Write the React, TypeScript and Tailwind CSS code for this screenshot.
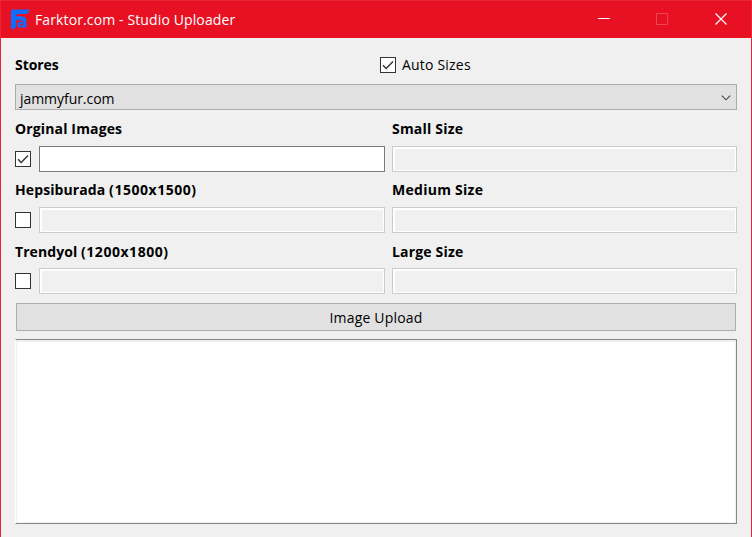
import type { ReactNode } from "react";

const FONT = "font-['Open_Sans','Noto_Sans',sans-serif]";

function Tick() {
  return (
    <svg width="14" height="14" viewBox="0 0 14 14" fill="none" className="block">
      <path d="M2 7.2L5.2 10.4L12 3.6" stroke="#333" strokeWidth="1.4" />
    </svg>
  );
}

function Check({ on = false }: { on?: boolean }) {
  return (
    <span className="block h-4 w-4 shrink-0 border border-[#333] bg-white">
      {on && <Tick />}
    </span>
  );
}

function Field({ enabled = false }: { enabled?: boolean }) {
  return enabled ? (
    <div className="h-[26px] min-w-0 flex-1 border border-[#7a7a7a] bg-white" />
  ) : (
    <div className="h-[26px] min-w-0 flex-1 border border-[#ccc] bg-white pt-0.5 pr-px pb-px pl-0.5">
      <div className="h-full bg-[#f0f0f0]" />
    </div>
  );
}

function Label({ children, track }: { children: ReactNode; track: string }) {
  return <div className={`h-5 text-[14px] leading-5 font-bold whitespace-nowrap ${track}`}>{children}</div>;
}

function Logo() {
  return (
    <svg width="18" height="21" viewBox="0 0 18 21" fill="#0d6efd" className="block">
      <path d="M2 0.5H18V2Q17.4 4.9 15 5H7.5Q5.4 5 5 7.2H10.5Q15.4 7.5 15.4 12V18.6H11.8V13.8Q11.6 11.2 9 11.2H5V17.8Q4.6 20 2 20H0V2.5Q0 0.5 2 0.5Z" />
      <path d="M9 13H11V15.2H9.4Q8.6 15.3 8.6 16Q8.6 16.6 9.4 16.7H12V18.6H9Q6.2 18.4 6.2 15.8Q6.2 13.2 9 13Z" />
    </svg>
  );
}

export default function App() {
  return (
    <div className={`flex h-[537px] w-[752px] flex-col border-x border-t border-[#e9253a] bg-[#f0f0f0] text-[14px] text-black ${FONT}`}>
      <header className="flex h-[37px] shrink-0 items-center bg-[#e81123] pl-[10px] text-white">
        <Logo />
        <span className="ml-[6px] text-[14px] leading-5 tracking-[0.12px] whitespace-nowrap">Farktor.com - Studio Uploader</span>
        <svg width="130" height="15" viewBox="0 0 130 15" fill="none" className="mr-[23px] ml-auto block">
          <path d="M0 6.5H12" stroke="white" />
          <path d="M58.5 1.5H69.5V12.5H58.5Z" stroke="#ed4454" />
          <path d="M117.5 1.5L128.5 12.5M128.5 1.5L117.5 12.5" stroke="white" strokeWidth="1.2" />
        </svg>
      </header>
      <main className="flex flex-col px-[14px] pt-[17px]">
        <div className="flex h-5 items-center">
          <div className="w-[365px]"><Label track="tracking-[-0.05px]">Stores</Label></div>
          <Check on />
          <span className="ml-[6px] leading-5 tracking-[0.2px]">Auto Sizes</span>
        </div>
        <div className="mt-[9px] flex h-[26px] w-[722px] items-center justify-between border border-[#adadad] bg-[#e1e1e1] pr-[5px] pl-[4px]">
          <span className="pt-[3px] leading-5 tracking-[-0.05px]">jammyfur.com</span>
          <svg width="10" height="6" viewBox="0 0 10 6" fill="none" className="mt-px"><path d="M.8.6L5 4.8L9.2.6" stroke="#444" strokeWidth="1.1" /></svg>
        </div>
        <div className="mt-[9px] flex w-[722px] gap-[7px]">
          <section className="w-[370px]">
            <Label track="tracking-[0.14px]">Orginal Images</Label>
            <div className="mt-[7px] flex items-center gap-2"><Check on /><Field enabled /></div>
          </section>
          <section className="min-w-0 flex-1">
            <Label track="tracking-[0.2px]">Small Size</Label>
            <div className="mt-[7px] flex"><Field /></div>
          </section>
        </div>
        <div className="mt-[8px] flex w-[722px] gap-[7px]">
          <section className="w-[370px]">
            <Label track="tracking-[0.1px]">Hepsiburada <span className="tracking-[0.53px]">(1500x1500)</span></Label>
            <div className="mt-[7px] flex items-center gap-2"><Check /><Field /></div>
          </section>
          <section className="min-w-0 flex-1">
            <Label track="tracking-[0.27px]">Medium Size</Label>
            <div className="mt-[7px] flex"><Field /></div>
          </section>
        </div>
        <div className="mt-[9px] flex w-[722px] gap-[7px]">
          <section className="w-[370px]">
            <Label track="tracking-[0.08px]">Trendyol <span className="tracking-[0.53px]">(1200x1800)</span></Label>
            <div className="mt-[6px] flex items-center gap-2"><Check /><Field /></div>
          </section>
          <section className="min-w-0 flex-1">
            <Label track="tracking-[0.17px]">Large Size</Label>
            <div className="mt-[6px] flex"><Field /></div>
          </section>
        </div>
        <button className="mt-[9px] ml-px flex h-[28px] w-[720px] items-center justify-center border border-[#adadad] bg-[#e1e1e1] leading-5">
          <span className="pt-px tracking-[0.2px]">Image Upload</span>
        </button>
        <div className="mt-[8px] h-[185px] w-[722px] border border-[#828790] border-l-white bg-white">
          <div className="h-full border border-t-2 border-[#f0f0f0]" />
        </div>
      </main>
    </div>
  );
}
